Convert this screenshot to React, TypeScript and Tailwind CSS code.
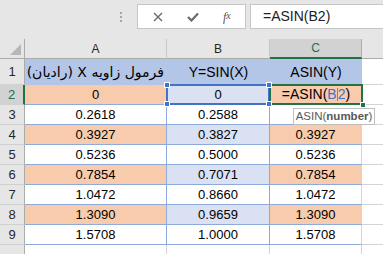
import React from 'react'

const rows = [
  { a: '0.2618', b: '0.2588', c: '0.2618' },
  { a: '0.3927', b: '0.3827', c: '0.3927' },
  { a: '0.5236', b: '0.5000', c: '0.5236' },
  { a: '0.7854', b: '0.7071', c: '0.7854' },
  { a: '1.0472', b: '0.8660', c: '1.0472' },
  { a: '1.3090', b: '0.9659', c: '1.3090' },
  { a: '1.5708', b: '1.0000', c: '1.5708' },
]

function RowHead({ n, active }: { n: number; active?: boolean }) {
  return (
    <div
      className={
        active
          ? 'flex items-center justify-center bg-[#d2d2d2] text-[#217346] border-b border-[#d2d2d2] border-r-2 border-r-[#217346] text-[13px]'
          : 'flex items-center justify-center bg-[#e6e6e6] text-[#262626] border-b border-[#d0d0d0] border-r border-r-[#ababab] text-[13px]'
      }
    >
      {n}
    </div>
  )
}

export default function App() {
  return (
    <div className="w-[383px] h-[254px] overflow-hidden bg-white font-['Liberation_Sans',sans-serif] text-black">
      {/* formula bar */}
      <div className="h-[39px] bg-[#e6e6e6] flex items-start pt-[4px]">
        <div className="w-[137px] flex justify-end pr-[15px] pt-[8px]">
          <div className="flex flex-col gap-[2px]">
            <span className="w-[2px] h-[2px] bg-[#a6a6a6]" />
            <span className="w-[2px] h-[2px] bg-[#a6a6a6]" />
            <span className="w-[2px] h-[2px] bg-[#a6a6a6]" />
          </div>
        </div>
        <div className="w-[109px] h-[25px] bg-white border border-[#c6c6c6] flex items-center">
          <div className="w-[40px] flex justify-center">
            <svg width="10" height="10" viewBox="0 0 10 10">
              <path d="M1 1L9 9M9 1L1 9" stroke="#6b6b6b" strokeWidth="1.4" />
            </svg>
          </div>
          <div className="w-[32px] flex justify-center">
            <svg width="12" height="10" viewBox="0 0 12 10">
              <path d="M1 5L4.5 8.5L11 1.5" stroke="#6b6b6b" strokeWidth="2.2" fill="none" />
            </svg>
          </div>
          <div className="w-[37px] flex justify-center font-['Liberation_Serif',serif] italic text-[12px] text-[#555]">
            f<span className="text-[10px]">x</span>
          </div>
        </div>
        <div className="ml-[4px] flex-1 h-[25px] bg-white border border-r-0 border-[#c6c6c6] flex items-center pl-[12px] text-[14px] text-[#222]">
          =ASIN(B2)
        </div>
      </div>

      {/* sheet */}
      <div className="grid grid-cols-[25px_142px_103px_92px_1fr] grid-rows-[20px_26px_repeat(8,20px)_20px] text-[13px]">
        {/* column headers */}
        <div className="bg-[#e6e6e6] border-b border-[#ababab] border-r border-r-[#ababab] flex items-end justify-end p-[3px]">
          <svg width="11" height="11" viewBox="0 0 11 11">
            <path d="M11 0L11 11L0 11Z" fill="#b7b7b7" />
          </svg>
        </div>
        <div className="bg-[#e6e6e6] border-b border-[#ababab] border-r border-r-[#c6c6c6] flex items-center justify-center text-[12px] text-[#262626]">A</div>
        <div className="bg-[#e6e6e6] border-b border-[#ababab] border-r border-r-[#c6c6c6] flex items-center justify-center text-[12px] text-[#262626]">B</div>
        <div className="bg-[#d2d2d2] border-b-2 border-[#217346] border-r border-r-[#ababab] flex items-center justify-center text-[12px] text-[#217346]">C</div>
        <div className="bg-[#e6e6e6] border-b border-[#ababab]" />

        {/* row 1 */}
        <RowHead n={1} />
        <div dir="rtl" className="bg-[#b4c6e7] flex items-center px-[3px] text-[14px] font-['DejaVu_Sans',sans-serif] whitespace-nowrap">
          فرمول زاویه X (رادیان)
        </div>
        <div className="bg-[#b4c6e7] flex items-center justify-center text-[14px]">Y=SIN(X)</div>
        <div className="bg-[#b4c6e7] flex items-center justify-center text-[14px]">ASIN(Y)</div>
        <div className="border-b border-[#d4d4d4]" />

        {/* row 2 */}
        <RowHead n={2} active />
        <div className="bg-[#f8cbad] border-b border-[#8eaadb] border-r border-r-[#8eaadb] flex items-center justify-center">0</div>
        <div className="relative bg-[#d9e1f2] border-b border-[#8eaadb] border-r border-r-[#8eaadb] flex items-center justify-center">
          0
          <div className="absolute -left-[1px] -top-[1px] -right-[1px] -bottom-[1px] border-2 border-[#4472c4]" />
          <span className="absolute -left-[3px] -top-[3px] w-[6px] h-[6px] bg-[#4472c4] border border-white" />
          <span className="absolute -right-[3px] -top-[3px] w-[6px] h-[6px] bg-[#4472c4] border border-white z-20" />
          <span className="absolute -left-[3px] -bottom-[3px] w-[6px] h-[6px] bg-[#4472c4] border border-white" />
          <span className="absolute -right-[3px] -bottom-[3px] w-[6px] h-[6px] bg-[#4472c4] border border-white z-20" />
        </div>
        <div className="relative z-10 bg-[#f8cbad] border-b border-[#8eaadb] flex items-center justify-center text-[14px]">
          =ASIN(<span className="text-[#4472c4]">B</span>
          <span className="w-px h-[13px] bg-[#888]" />
          <span className="text-[#4472c4]">2</span>)
          <div className="absolute -left-[1px] -top-[1px] -right-[1px] -bottom-[1px] border-2 border-[#217346]" />
          <span className="absolute -right-[4px] -bottom-[4px] w-[6px] h-[6px] bg-[#217346] border border-white" />
        </div>
        <div className="border-b border-[#d4d4d4]" />

        {/* rows 3-9 */}
        {rows.map((r, i) => {
          const even = i % 2 === 1
          return (
            <React.Fragment key={i}>
              <RowHead n={i + 3} />
              <div className={`${even ? 'bg-[#f8cbad]' : 'bg-white'} border-b border-[#8eaadb] border-r border-r-[#8eaadb] flex items-center justify-center`}>
                {r.a}
              </div>
              <div className={`${even ? 'bg-[#d9e1f2]' : 'bg-white'} border-b border-[#8eaadb] border-r border-r-[#8eaadb] flex items-center justify-center`}>
                {r.b}
              </div>
              <div className={`relative ${even ? 'bg-[#f8cbad]' : 'bg-white'} border-b border-[#8eaadb] border-r border-r-[#d4d4d4] flex items-center justify-center`}>
                {i === 0 ? null : r.c}
                {i === 0 && (
                  <div className="absolute left-[23px] top-[3px] w-[82px] h-[17px] z-30 bg-white border border-[#bfbfbf] flex items-center justify-center text-[11.5px] text-[#595959] whitespace-nowrap">
                    ASIN(<b className="font-bold">number</b>)
                  </div>
                )}
              </div>
              <div className="border-b border-[#d4d4d4]" />
            </React.Fragment>
          )
        })}

        {/* row 10 */}
        <div className="bg-[#e6e6e6] border-r border-[#ababab] flex justify-center pt-[4px] text-[13px] text-[#262626]">10</div>
        <div className="border-r border-[#d4d4d4]" />
        <div className="border-r border-[#d4d4d4]" />
        <div className="border-r border-[#d4d4d4]" />
        <div />
      </div>
    </div>
  )
}
